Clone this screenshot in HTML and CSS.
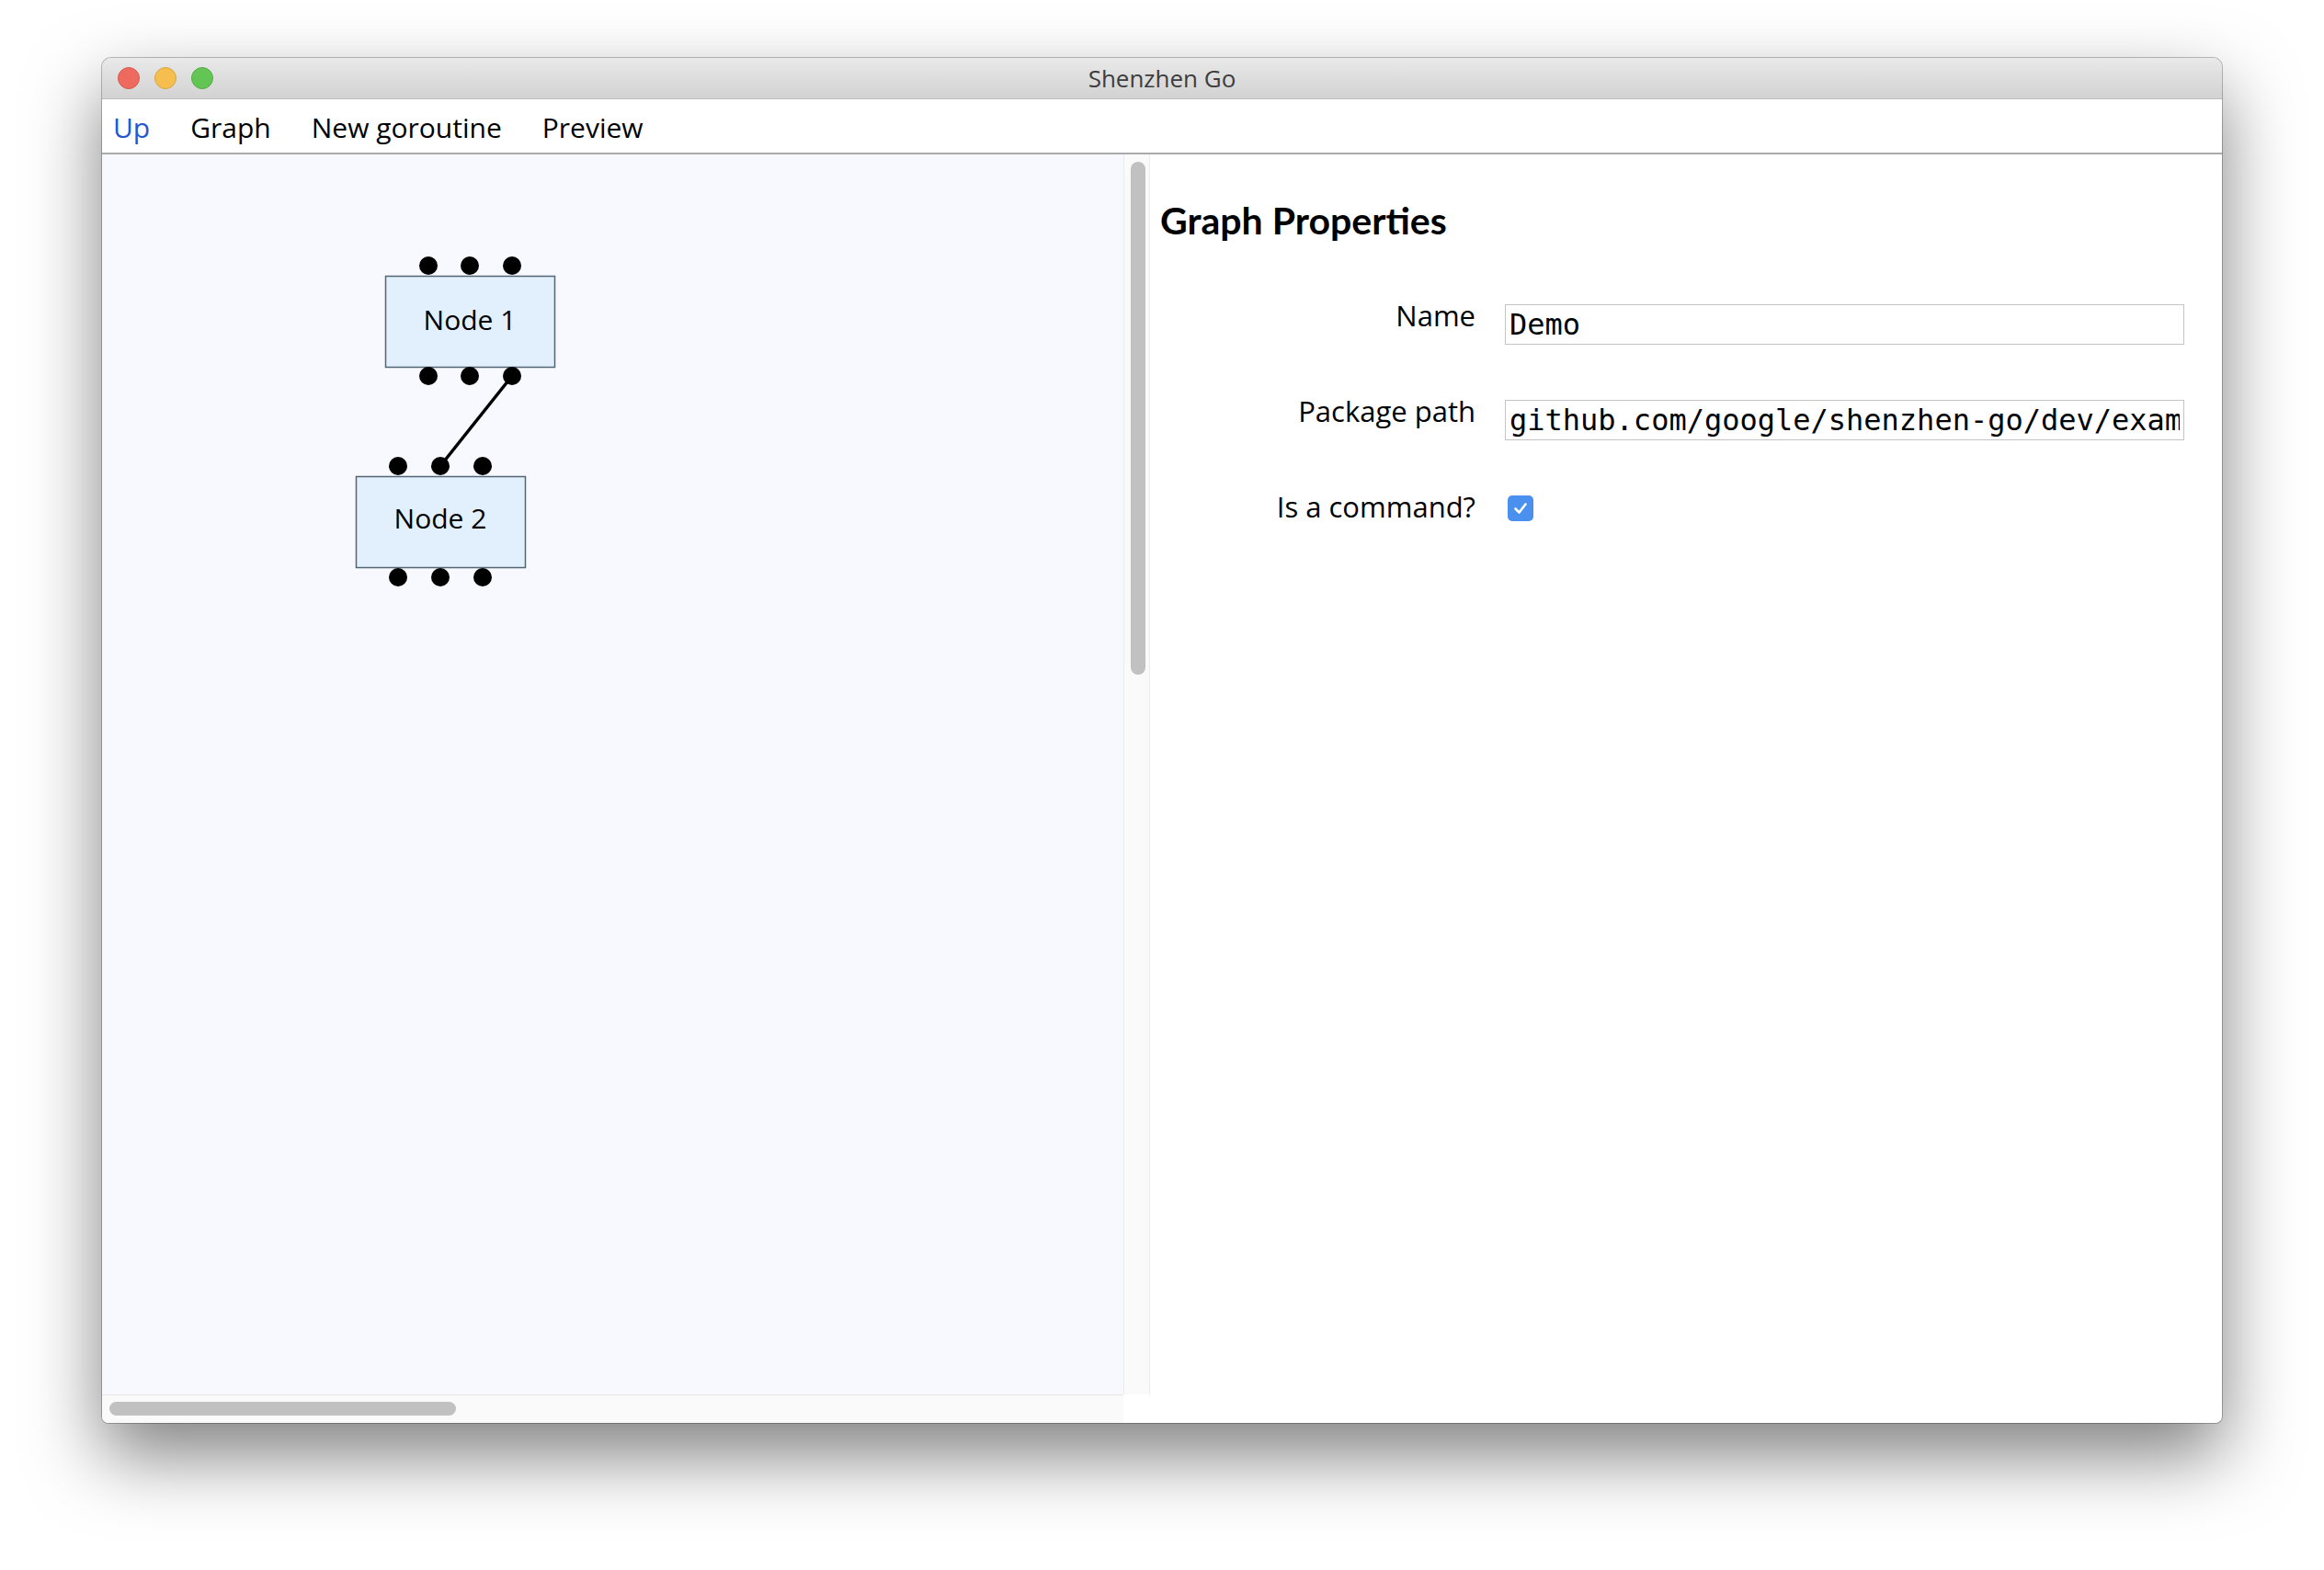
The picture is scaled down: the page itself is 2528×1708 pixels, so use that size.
FILE: index.html
```html
<!DOCTYPE html>
<html lang="en">
<head>
    <meta charset="UTF-8">
    <meta name="viewport" content="width=device-width, initial-scale=1.0">
    <title>Shenzhen Go</title>
    <link rel="stylesheet" href="styles.css">
</head>
<body>
    <div class="window">
        <div class="titlebar">
            <div class="lights">
                <span class="light red"></span>
                <span class="light yellow"></span>
                <span class="light green"></span>
            </div>
            <div class="title">Shenzhen Go</div>
            <div></div>
        </div>

        <nav class="menu">
            <a href="#" class="up">Up</a>
            <a href="#">Graph</a>
            <a href="#">New goroutine</a>
            <a href="#">Preview</a>
        </nav>

        <div class="main">
            <div class="left">
                <div class="canvas">
                    <svg class="graph" width="600" height="520" viewBox="0 0 600 520">
                        <line x1="446" y1="241" x2="368" y2="339" class="channel"/>

                        <rect x="308.5" y="132.5" width="184" height="99" class="node"/>
                        <text x="400" y="191" class="node-label">Node 1</text>
                        <circle cx="355" cy="121" r="10"/>
                        <circle cx="400" cy="121" r="10"/>
                        <circle cx="446" cy="121" r="10"/>
                        <circle cx="355" cy="241" r="10"/>
                        <circle cx="400" cy="241" r="10"/>
                        <circle cx="446" cy="241" r="10"/>

                        <rect x="276.5" y="350.5" width="184" height="99" class="node"/>
                        <text x="368" y="407" class="node-label">Node 2</text>
                        <circle cx="322" cy="339" r="10"/>
                        <circle cx="368" cy="339" r="10"/>
                        <circle cx="414" cy="339" r="10"/>
                        <circle cx="322" cy="460" r="10"/>
                        <circle cx="368" cy="460" r="10"/>
                        <circle cx="414" cy="460" r="10"/>
                    </svg>
                </div>
                <div class="vscroll"><div class="thumb vthumb"></div></div>
                <div class="hscroll"><div class="thumb hthumb"></div></div>
                <div class="corner"></div>
            </div>

            <div class="right">
                <h2>Graph Properties</h2>
                <div class="form">
                    <label for="name">Name</label>
                    <input type="text" id="name" class="field" value="Demo">

                    <label for="pkgpath">Package path</label>
                    <input type="text" id="pkgpath" class="field" value="github.com/google/shenzhen-go/dev/examples/demo">

                    <label>Is a command?</label>
                    <span class="check">
                        <svg width="18" height="18" viewBox="0 0 18 18"><path d="M3.5 9.5 L7.5 13.5 L14.5 4.5" fill="none" stroke="#fff" stroke-width="2.6" stroke-linecap="round" stroke-linejoin="round"/></svg>
                    </span>
                </div>
            </div>
        </div>
    </div>
</body>
</html>
```

FILE: styles.css
```css
body {
    margin: 0;
    min-height: 100vh;
    background-color: #fff;
    font-family: "Open Sans", sans-serif;
    color: #000;
}

.window {
    margin: 63px 0 0 111px;
    width: 2306px;
    height: 1485px;
    border-radius: 10px 10px 7px 7px;
    overflow: hidden;
    background-color: #fff;
    display: flex;
    flex-direction: column;
    box-shadow: 0 0 0 1px rgba(0, 0, 0, 0.25), 0 35px 80px rgba(0, 0, 0, 0.5);
}

/* barra de titulo */
.titlebar {
    height: 44px;
    border-bottom: 1px solid #bdbdbd;
    background: linear-gradient(#e9e9e9, #d2d2d2);
    display: grid;
    grid-template-columns: 1fr auto 1fr;
    align-items: center;
}

.lights {
    display: flex;
    gap: 16px;
    padding-left: 17px;
}

.light {
    width: 22px;
    height: 22px;
    border-radius: 50%;
    border: 1px solid;
}

.red { background-color: #ee6a5f; border-color: #d65a50; }
.yellow { background-color: #f5be4f; border-color: #d9a443; }
.green { background-color: #62c554; border-color: #55ab45; }

.title {
    font-size: 26px;
    line-height: 44px;
    color: #3d3d3d;
}

/* menu */
.menu {
    height: 54px;
    padding: 4px 0 0 12px;
    border-bottom: 2px solid #aaa;
    display: flex;
    gap: 44px;
    font-size: 30px;
    line-height: 54px;
}

.menu a {
    color: #000;
    text-decoration: none;
}

.menu a.up {
    color: #2456d4;
}

.main {
    flex: 1;
    display: flex;
    min-height: 0;
}

/* painel do grafo */
.left {
    width: 1140px;
    display: grid;
    grid-template-columns: 1111px 29px;
    grid-template-rows: 1349px 31px;
}

.canvas {
    background-color: #f8f8ff;
    overflow: hidden;
}

.graph {
    display: block;
}

.graph circle {
    fill: #000;
}

.node {
    fill: #e2effc;
    stroke: #536474;
    stroke-width: 1.5;
}

.node-label {
    font-family: "Open Sans", sans-serif;
    font-size: 30px;
    text-anchor: middle;
    fill: #000;
}

.channel {
    stroke: #000;
    stroke-width: 3.5;
}

.vscroll {
    background-color: #fafafa;
    border-left: 1px solid #ececec;
    border-right: 1px solid #ececec;
    padding: 8px 4px 0 7px;
}

.hscroll {
    background-color: #fafafa;
    border-top: 1px solid #e6e6e6;
    padding: 7px 0 0 8px;
}

.corner {
    background-color: #fff;
}

.thumb {
    background-color: #c1c1c1;
    border-radius: 8px;
}

.vthumb {
    width: 16px;
    height: 558px;
}

.hthumb {
    width: 377px;
    height: 15px;
}

/* propriedades */
.right {
    flex: 1;
    padding: 48px 41px 0 11px;
}

.right h2 {
    font-family: Lato, sans-serif;
    font-weight: 700;
    font-size: 41px;
    line-height: 48px;
    margin: 0 0 67px;
}

.form {
    display: grid;
    grid-template-columns: 343px 739px;
    column-gap: 32px;
    row-gap: 60px;
    align-items: start;
}

.form label {
    text-align: right;
    font-size: 31px;
    line-height: 24px;
}

.field {
    width: 739px;
    height: 44px;
    box-sizing: border-box;
    border: 1px solid #c4c4c4;
    border-radius: 0;
    padding: 0 4px;
    margin: 0;
    font-family: "DejaVu Sans Mono", monospace;
    font-size: 32px;
    color: #000;
    background-color: #fff;
    outline: none;
}

.check {
    width: 28px;
    height: 28px;
    margin-left: 3px;
    border-radius: 5px;
    background-color: #4a90ee;
    display: flex;
    align-items: center;
    justify-content: center;
}
```
